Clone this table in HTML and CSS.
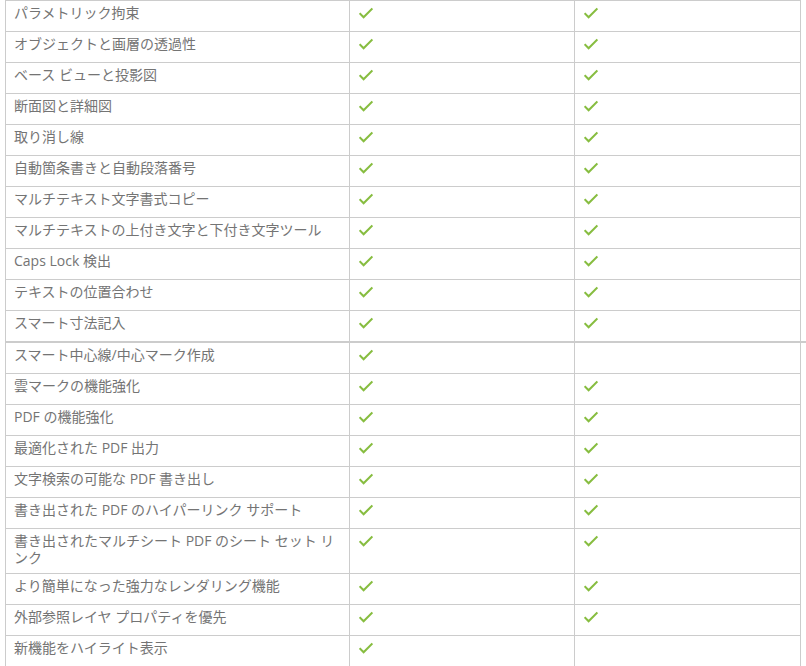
FILE: index.html
```html
<!DOCTYPE html>
<html lang="ja">
<head>
<meta charset="utf-8">
<title>機能比較</title>
<link rel="stylesheet" href="styles.css">
</head>
<body>
<svg width="0" height="0" class="defs" aria-hidden="true">
  <defs>
    <symbol id="chk" viewBox="0 0 14 20">
      <polyline points="0.6,8.2 4.6,12.2 13.4,3.4" fill="none" stroke="#87bd40" stroke-width="2.1" stroke-linecap="butt" stroke-linejoin="miter"/>
    </symbol>
  </defs>
</svg>
<div class="sheet">
  <div class="grid first">
    <div class="row"><div class="cell name">パラメトリック拘束</div><div class="cell mark"><svg class="chk"><use href="#chk"/></svg></div><div class="cell mark"><svg class="chk"><use href="#chk"/></svg></div></div>
    <div class="row"><div class="cell name">オブジェクトと画層の透過性</div><div class="cell mark"><svg class="chk"><use href="#chk"/></svg></div><div class="cell mark"><svg class="chk"><use href="#chk"/></svg></div></div>
    <div class="row"><div class="cell name">ベース ビューと投影図</div><div class="cell mark"><svg class="chk"><use href="#chk"/></svg></div><div class="cell mark"><svg class="chk"><use href="#chk"/></svg></div></div>
    <div class="row"><div class="cell name">断面図と詳細図</div><div class="cell mark"><svg class="chk"><use href="#chk"/></svg></div><div class="cell mark"><svg class="chk"><use href="#chk"/></svg></div></div>
    <div class="row"><div class="cell name">取り消し線</div><div class="cell mark"><svg class="chk"><use href="#chk"/></svg></div><div class="cell mark"><svg class="chk"><use href="#chk"/></svg></div></div>
    <div class="row"><div class="cell name">自動箇条書きと自動段落番号</div><div class="cell mark"><svg class="chk"><use href="#chk"/></svg></div><div class="cell mark"><svg class="chk"><use href="#chk"/></svg></div></div>
    <div class="row"><div class="cell name">マルチテキスト文字書式コピー</div><div class="cell mark"><svg class="chk"><use href="#chk"/></svg></div><div class="cell mark"><svg class="chk"><use href="#chk"/></svg></div></div>
    <div class="row"><div class="cell name">マルチテキストの上付き文字と下付き文字ツール</div><div class="cell mark"><svg class="chk"><use href="#chk"/></svg></div><div class="cell mark"><svg class="chk"><use href="#chk"/></svg></div></div>
    <div class="row"><div class="cell name">Caps Lock 検出</div><div class="cell mark"><svg class="chk"><use href="#chk"/></svg></div><div class="cell mark"><svg class="chk"><use href="#chk"/></svg></div></div>
    <div class="row"><div class="cell name">テキストの位置合わせ</div><div class="cell mark"><svg class="chk"><use href="#chk"/></svg></div><div class="cell mark"><svg class="chk"><use href="#chk"/></svg></div></div>
    <div class="row"><div class="cell name">スマート寸法記入</div><div class="cell mark"><svg class="chk"><use href="#chk"/></svg></div><div class="cell mark"><svg class="chk"><use href="#chk"/></svg></div></div>
  </div>
  <div class="divider"></div>
  <div class="grid second">
    <div class="row"><div class="cell name">スマート中心線/中心マーク作成</div><div class="cell mark"><svg class="chk"><use href="#chk"/></svg></div><div class="cell mark"></div></div>
    <div class="row"><div class="cell name">雲マークの機能強化</div><div class="cell mark"><svg class="chk"><use href="#chk"/></svg></div><div class="cell mark"><svg class="chk"><use href="#chk"/></svg></div></div>
    <div class="row"><div class="cell name">PDF の機能強化</div><div class="cell mark"><svg class="chk"><use href="#chk"/></svg></div><div class="cell mark"><svg class="chk"><use href="#chk"/></svg></div></div>
    <div class="row"><div class="cell name">最適化された PDF 出力</div><div class="cell mark"><svg class="chk"><use href="#chk"/></svg></div><div class="cell mark"><svg class="chk"><use href="#chk"/></svg></div></div>
    <div class="row"><div class="cell name">文字検索の可能な PDF 書き出し</div><div class="cell mark"><svg class="chk"><use href="#chk"/></svg></div><div class="cell mark"><svg class="chk"><use href="#chk"/></svg></div></div>
    <div class="row"><div class="cell name">書き出された PDF のハイパーリンク サポート</div><div class="cell mark"><svg class="chk"><use href="#chk"/></svg></div><div class="cell mark"><svg class="chk"><use href="#chk"/></svg></div></div>
    <div class="row"><div class="cell name">書き出されたマルチシート PDF のシート セット リンク</div><div class="cell mark"><svg class="chk"><use href="#chk"/></svg></div><div class="cell mark"><svg class="chk"><use href="#chk"/></svg></div></div>
    <div class="row"><div class="cell name">より簡単になった強力なレンダリング機能</div><div class="cell mark"><svg class="chk"><use href="#chk"/></svg></div><div class="cell mark"><svg class="chk"><use href="#chk"/></svg></div></div>
    <div class="row"><div class="cell name">外部参照レイヤ プロパティを優先</div><div class="cell mark"><svg class="chk"><use href="#chk"/></svg></div><div class="cell mark"><svg class="chk"><use href="#chk"/></svg></div></div>
    <div class="row"><div class="cell name">新機能をハイライト表示</div><div class="cell mark"><svg class="chk"><use href="#chk"/></svg></div><div class="cell mark"></div></div>
  </div>
</div>
</body>
</html>
```
FILE: styles.css
```css
html, body {
  margin: 0;
  padding: 0;
  background: #ffffff;
}

body {
  font-family: "Open Sans", "Noto Sans CJK JP", sans-serif;
  font-size: 14px;
  line-height: 17px;
  color: #747474;
}

.defs {
  position: absolute;
  width: 0;
  height: 0;
  overflow: hidden;
}

.sheet {
  padding-left: 5px;
}

.grid {
  width: 796px;
  box-sizing: border-box;
  border-left: 1px solid #cccccc;
  border-right: 1px solid #cccccc;
}

.grid.first {
  border-top: 1px solid #cccccc;
}

.row {
  display: grid;
  grid-template-columns: 343px 225px 226px;
  border-bottom: 1px solid #cccccc;
}

.grid.first .row:last-child {
  border-bottom: none;
}

.cell {
  box-sizing: border-box;
  padding: 3px 9px 7px 8px;
  min-height: 30px;
}

.cell + .cell {
  border-left: 1px solid #cccccc;
}

.mark {
  padding-top: 4px;
  padding-bottom: 6px;
  padding-left: 9px;
}

.chk {
  display: block;
  width: 14px;
  height: 20px;
}

.divider {
  height: 2px;
  background: #cccccc;
  width: 801px;
}
```
